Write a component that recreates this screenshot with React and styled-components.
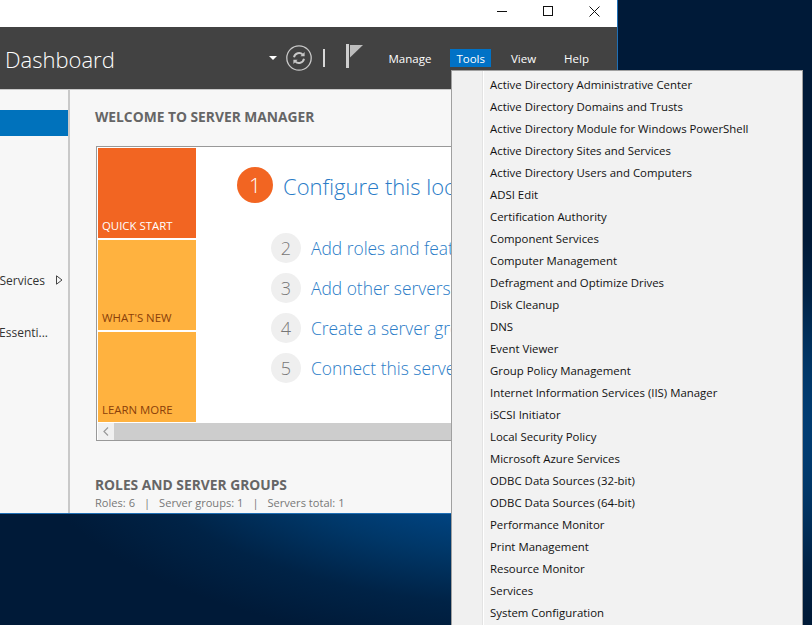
import React from 'react';
import styled, { createGlobalStyle } from 'styled-components';

const FONT = '"Open Sans", "Noto Sans", sans-serif';

const toolItems = [
  'Active Directory Administrative Center',
  'Active Directory Domains and Trusts',
  'Active Directory Module for Windows PowerShell',
  'Active Directory Sites and Services',
  'Active Directory Users and Computers',
  'ADSI Edit',
  'Certification Authority',
  'Component Services',
  'Computer Management',
  'Defragment and Optimize Drives',
  'Disk Cleanup',
  'DNS',
  'Event Viewer',
  'Group Policy Management',
  'Internet Information Services (IIS) Manager',
  'iSCSI Initiator',
  'Local Security Policy',
  'Microsoft Azure Services',
  'ODBC Data Sources (32-bit)',
  'ODBC Data Sources (64-bit)',
  'Performance Monitor',
  'Print Management',
  'Resource Monitor',
  'Services',
  'System Configuration',
];

const steps = [
  { n: 2, label: 'Add roles and features' },
  { n: 3, label: 'Add other servers to manage' },
  { n: 4, label: 'Create a server group' },
  { n: 5, label: 'Connect this server to cloud services' },
];

const GlobalStyle = createGlobalStyle`
  html, body {
    margin: 0;
    height: 100%;
    overflow: hidden;
    font-family: ${FONT};
  }
`;

const Desktop = styled.div`
  position: relative;
  width: 812px;
  height: 625px;
  overflow: hidden;
  background:
    radial-gradient(ellipse 520px 220px at 540px 430px, #005596 0%, #00488a 35%, #003768 58%, rgba(0, 42, 82, 0.55) 80%, rgba(0, 30, 60, 0) 100%),
    #001a38;
`;

const Window = styled.div`
  display: flex;
  flex-direction: column;
  width: 617px;
  height: 513px;
  border-right: 1px solid #1f6fb5;
  border-bottom: 1px solid #1f6fb5;
`;

const TitleBar = styled.div`
  display: flex;
  justify-content: flex-end;
  flex: 0 0 27px;
  background: #fff;
`;

const WinButton = styled.div`
  display: flex;
  align-items: center;
  justify-content: center;
  width: 46px;
  height: 22px;
`;

const Header = styled.header`
  display: flex;
  align-items: center;
  flex: 0 0 62px;
  padding-left: 5px;
  background: #424242;
  border-bottom: 1px solid #c9c9c9;
`;

const Title = styled.h1`
  flex: 1;
  margin: 2px 0 0;
  font-size: 22px;
  font-weight: 300;
  color: #fff;
`;

const Tools = styled.div`
  display: flex;
  align-items: center;
  height: 100%;
`;

const Caret = styled.span`
  width: 0;
  height: 0;
  margin-right: 9px;
  border-left: 4px solid transparent;
  border-right: 4px solid transparent;
  border-top: 4px solid #fff;
`;

const Divider = styled.span`
  width: 2px;
  height: 18px;
  margin: 0 21px 0 11px;
  background: #d8d8d8;
`;

const Nav = styled.nav`
  display: flex;
  align-items: center;
  margin-left: 18px;
  padding-right: 21px;
`;

const NavItem = styled.span`
  display: flex;
  align-items: center;
  height: 18px;
  padding: 0 ${(p) => (p.$active ? 6 : 7)}px;
  margin-right: ${(p) => p.$gap}px;
  font-size: 11.5px;
  color: #fff;
  background: ${(p) => (p.$active ? '#0072c6' : 'transparent')};
`;

const Body = styled.div`
  display: flex;
  flex: 1;
  min-height: 0;
`;

const Sidebar = styled.aside`
  flex: 0 0 68px;
  padding-top: 20px;
  background: #f7f7f7;
  border-right: 2px solid #c9c9c9;
  overflow: hidden;
`;

const SideSelected = styled.div`
  height: 26px;
  background: #0072bc;
`;

const SideRow = styled.div`
  display: flex;
  align-items: center;
  justify-content: flex-end;
  height: 22px;
  margin-top: ${(p) => p.$top}px;
  padding-right: ${(p) => p.$right}px;
  font-size: 12px;
  color: #333;
  white-space: nowrap;
`;

const SideArrow = styled.svg`
  flex: 0 0 7px;
  height: 10px;
  margin-left: 11px;
`;

const Main = styled.main`
  flex: 1;
  min-width: 0;
  padding: 17px 0 0 25px;
  background: #f7f7f7;
  overflow: hidden;
`;

const SectionHeading = styled.h2`
  margin: 0;
  font-size: 13.8px;
  line-height: 20px;
  font-weight: 700;
  color: #666;
  white-space: nowrap;
`;

const WelcomeBox = styled.div`
  display: flex;
  flex-direction: column;
  width: 500px;
  height: 293px;
  margin: 19px 0 0 1px;
  border: 1px solid #999;
  background: #fff;
`;

const WelcomeBody = styled.div`
  display: flex;
  flex: 1;
  min-height: 0;
  padding: 1px 0 0 1px;
`;

const TileColumn = styled.div`
  display: flex;
  flex-direction: column;
  gap: 2px;
  flex: 0 0 98px;
`;

const Tile = styled.div`
  display: flex;
  align-items: flex-end;
  height: 90px;
  padding: 0 0 5px 4px;
  box-sizing: border-box;
  font-size: 11.4px;
  white-space: nowrap;
  background: ${(p) => (p.$primary ? '#f26522' : '#ffb23f')};
  color: ${(p) => (p.$primary ? '#fff' : '#8a3f0a')};
`;

const Steps = styled.div`
  display: flex;
  flex-direction: column;
  padding: 19px 0 0 41px;
  white-space: nowrap;
`;

const LeadRow = styled.div`
  display: flex;
  align-items: center;
  gap: 10px;
  margin-bottom: 30px;
`;

const LeadBadge = styled.span`
  display: flex;
  align-items: center;
  justify-content: center;
  width: 36px;
  height: 36px;
  border-radius: 50%;
  background: #f26522;
  color: #fff;
  font-size: 21px;
  font-weight: 300;
`;

const LeadLabel = styled.span`
  padding-top: 2px;
  font-size: 22px;
  font-weight: 300;
  color: #2a7cc7;
`;

const StepRow = styled.div`
  display: flex;
  align-items: center;
  gap: 10px;
  height: 30px;
  margin: 0 0 10px 34px;
`;

const StepBadge = styled.span`
  display: flex;
  align-items: center;
  justify-content: center;
  width: 30px;
  height: 30px;
  border-radius: 50%;
  background: #efefef;
  color: #777;
  font-size: 18px;
  font-weight: 300;
`;

const StepLabel = styled.span`
  font-size: 17.4px;
  font-weight: 300;
  color: #2a7cc7;
`;

const ScrollBar = styled.div`
  display: flex;
  flex: 0 0 17px;
  margin: 1px 0 0 1px;
  background: #cdcdcd;
`;

const ScrollButton = styled.div`
  display: flex;
  align-items: center;
  justify-content: center;
  width: 16px;
  background: #f0f0f0;
`;

const RolesHeading = styled(SectionHeading)`
  margin-top: 34px;
`;

const RolesMeta = styled.div`
  margin-top: -1px;
  font-size: 11.1px;
  line-height: 18px;
  color: #777;
  white-space: nowrap;
`;

const MetaSep = styled.span`
  margin: 0 9px;
`;

/* the dropdown really does sit over the window */
const Menu = styled.ul`
  position: absolute;
  top: 70px;
  left: 451px;
  width: 350px;
  height: 570px;
  margin: 0;
  padding: 3px 0 0;
  list-style: none;
  border: 1px solid #a0a0a0;
  background: linear-gradient(90deg, #f0f0f0 0, #f0f0f0 30px, #e3e3e3 30px, #e3e3e3 31px, #fff 31px, #fff 32px, #f2f2f2 32px);
`;

const MenuItem = styled.li`
  height: 22px;
  padding-left: 38px;
  font-size: 11.4px;
  line-height: 22px;
  color: #111;
  white-space: nowrap;
`;

const Minimize = () => (
  <svg width="10" height="10" viewBox="0 0 10 10"><path d="M0 5.5h10" stroke="#111" /></svg>
);

const Maximize = () => (
  <svg width="10" height="10" viewBox="0 0 10 10"><rect x="0.5" y="0.5" width="9" height="9" fill="none" stroke="#111" /></svg>
);

const Close = () => (
  <svg width="11" height="11" viewBox="0 0 11 11"><path d="M0.5 0.5l10 10M10.5 0.5l-10 10" stroke="#111" fill="none" /></svg>
);

const RefreshIcon = () => (
  <svg width="26" height="26" viewBox="0 0 26 26" fill="none">
    <circle cx="13" cy="13" r="12.2" stroke="#c8c8c8" strokeWidth="1.3" />
    <path d="M8 12.2a5.2 5.2 0 0 1 8.8-2.6" stroke="#c8c8c8" strokeWidth="1.9" />
    <path d="M18.6 7v4.2h-4.2z" fill="#c8c8c8" />
    <path d="M18 13.8a5.2 5.2 0 0 1-8.8 2.6" stroke="#c8c8c8" strokeWidth="1.9" />
    <path d="M7.4 19v-4.2h4.2z" fill="#c8c8c8" />
  </svg>
);

// empty strip at the bottom keeps the flag itself 2px above the header's centre line
const FlagIcon = () => (
  <svg width="18" height="28" viewBox="0 0 18 28">
    <rect x="0" y="0" width="3" height="24" fill="#cfcfcf" />
    <path d="M4 1h13L4 13.5z" fill="#bdbdbd" />
  </svg>
);

const ChevronLeft = () => (
  <svg width="6" height="9" viewBox="0 0 6 9"><path d="M5 0.5L1 4.5l4 4" fill="none" stroke="#999" strokeWidth="1.2" /></svg>
);

export default function App() {
  return (
    <Desktop>
      <GlobalStyle />
      <Window>
        <TitleBar>
          <WinButton><Minimize /></WinButton>
          <WinButton><Maximize /></WinButton>
          <WinButton><Close /></WinButton>
        </TitleBar>
        <Header>
          <Title>Dashboard</Title>
          <Tools>
            <Caret />
            <RefreshIcon />
            <Divider />
            <FlagIcon />
            <Nav>
              <NavItem $gap={12}>Manage</NavItem>
              <NavItem $gap={13} $active>Tools</NavItem>
              <NavItem $gap={14}>View</NavItem>
              <NavItem $gap={0}>Help</NavItem>
            </Nav>
          </Tools>
        </Header>
        <Body>
          <Sidebar>
            <SideSelected />
            <SideRow $top={133} $right={5}>
              File and Storage Services
              <SideArrow viewBox="0 0 7 10"><path d="M0.5 0.8L6 5L0.5 9.2z" fill="none" stroke="#444" /></SideArrow>
            </SideRow>
            <SideRow $top={30} $right={20}>Windows Server Essenti...</SideRow>
          </Sidebar>
          <Main>
            <SectionHeading>WELCOME TO SERVER MANAGER</SectionHeading>
            <WelcomeBox>
              <WelcomeBody>
                <TileColumn>
                  <Tile $primary>QUICK START</Tile>
                  <Tile>WHAT'S NEW</Tile>
                  <Tile>LEARN MORE</Tile>
                </TileColumn>
                <Steps>
                  <LeadRow>
                    <LeadBadge>1</LeadBadge>
                    <LeadLabel>Configure this local server</LeadLabel>
                  </LeadRow>
                  {steps.map((s) => (
                    <StepRow key={s.n}>
                      <StepBadge>{s.n}</StepBadge>
                      <StepLabel>{s.label}</StepLabel>
                    </StepRow>
                  ))}
                </Steps>
              </WelcomeBody>
              <ScrollBar>
                <ScrollButton><ChevronLeft /></ScrollButton>
              </ScrollBar>
            </WelcomeBox>
            <RolesHeading>ROLES AND SERVER GROUPS</RolesHeading>
            <RolesMeta>
              Roles: 6<MetaSep>|</MetaSep>Server groups: 1<MetaSep>|</MetaSep>Servers total: 1
            </RolesMeta>
          </Main>
        </Body>
      </Window>
      <Menu>
        {toolItems.map((item) => (
          <MenuItem key={item}>{item}</MenuItem>
        ))}
      </Menu>
    </Desktop>
  );
}
